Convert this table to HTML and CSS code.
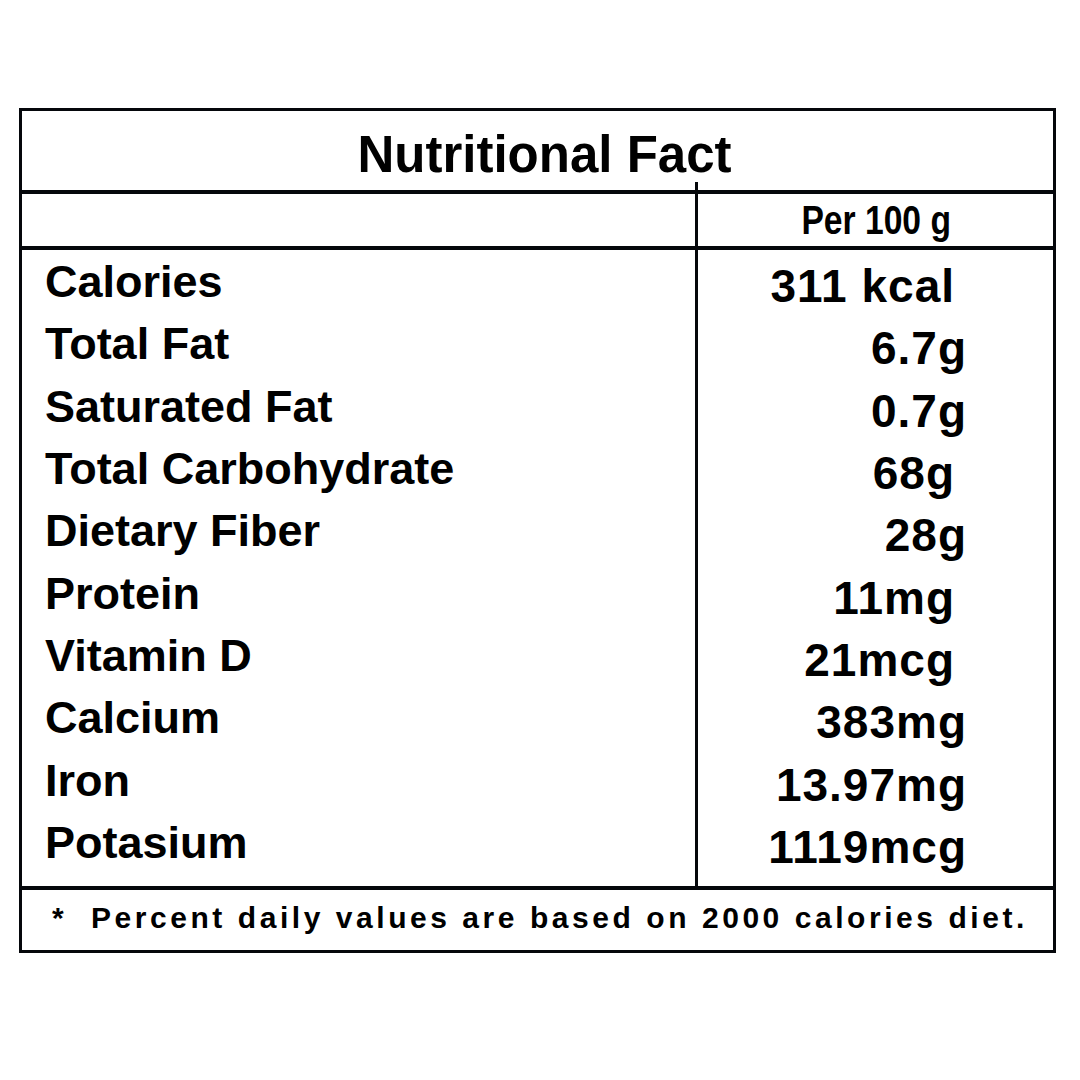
FILE: index.html
```html
<!DOCTYPE html>
<html lang="en">
<head>
<meta charset="utf-8">
<title>Nutritional Fact</title>
<link rel="stylesheet" href="styles.css">
</head>
<body>
<div class="label">
  <h1 class="title">Nutritional Fact</h1>
  <div class="table">
    <div class="head-row">
      <div class="left"></div>
      <div class="right per"><span class="per-text">Per 100 g</span></div>
    </div>
    <div class="body">
      <ul class="names">
        <li>Calories</li>
        <li>Total Fat</li>
        <li>Saturated Fat</li>
        <li>Total Carbohydrate</li>
        <li>Dietary Fiber</li>
        <li>Protein</li>
        <li>Vitamin D</li>
        <li>Calcium</li>
        <li>Iron</li>
        <li>Potasium</li>
      </ul>
      <ul class="right values">
        <li class="in">311 kcal</li>
        <li>6.7g</li>
        <li>0.7g</li>
        <li class="in">68g</li>
        <li>28g</li>
        <li class="in">11mg</li>
        <li class="in">21mcg</li>
        <li>383mg</li>
        <li>13.97mg</li>
        <li>1119mcg</li>
      </ul>
    </div>
  </div>
  <p class="note">*&nbsp;&nbsp;Percent daily values are based on 2000 calories diet.</p>
</div>
</body>
</html>
```
FILE: styles.css
```css
html, body {
  margin: 0;
  padding: 0;
  background: #ffffff;
}

body {
  font-family: "Liberation Sans", Arial, sans-serif;
  color: #000;
  width: 1080px;
  height: 1080px;
}

.label {
  margin: 108px 0 0 19px;
  width: 1031px;
  border: 3px solid #05070b;
}

.title {
  margin: 0;
  height: 79px;
  box-sizing: border-box;
  padding: 16px 0 0 14px;
  text-align: center;
  font-size: 51px;
  line-height: 56px;
  font-weight: bold;
}

.table {
  position: relative;
  border-top: 4px solid #05070b;
  border-bottom: 4px solid #05070b;
}

.table::before {
  content: "";
  position: absolute;
  left: 673px;
  top: -12px;
  width: 3px;
  height: 12px;
  background: #05070b;
}

.head-row {
  display: flex;
  height: 52px;
  border-bottom: 4px solid #05070b;
}

.left {
  width: 673px;
}

.right {
  flex: 1;
  border-left: 3px solid #05070b;
}

.per {
  font-weight: bold;
  font-size: 41px;
  line-height: 52px;
  text-align: center;
  padding-left: 2px;
}

.per-text {
  display: inline-block;
  transform: scaleX(0.82);
}

.body {
  display: flex;
  height: 636px;
}

.names, .values {
  list-style: none;
  margin: 0;
  font-weight: bold;
  line-height: 62.33px;
}

.names {
  width: 673px;
  box-sizing: border-box;
  padding: 1px 0 0 23px;
  font-size: 45px;
}

.values {
  padding: 5px 86px 0 0;
  font-size: 46px;
  letter-spacing: 1px;
  text-align: right;
}

.values .in {
  padding-right: 12px;
}

.note {
  margin: 0;
  height: 60px;
  box-sizing: border-box;
  padding: 11px 0 0 30px;
  font-size: 30px;
  line-height: 34px;
  font-weight: bold;
  letter-spacing: 3.55px;
  white-space: nowrap;
}
```
